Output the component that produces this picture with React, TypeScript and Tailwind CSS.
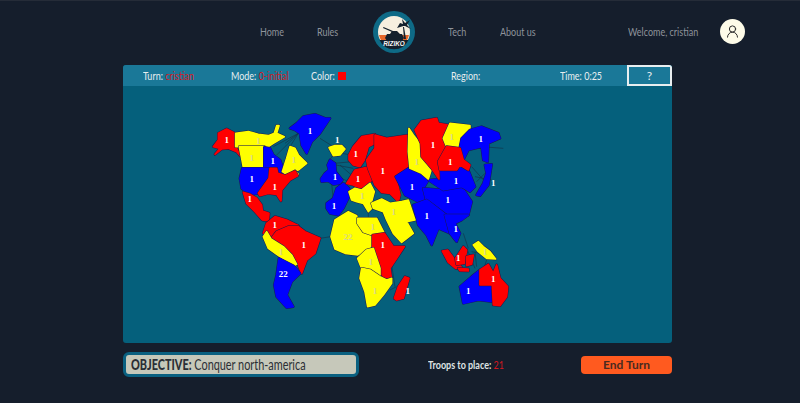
import type { ReactNode } from 'react'
import { UserRound } from 'lucide-react'

const RED = '#ff0000'
const BLUE = '#0000ff'
const YELLOW = '#ffff00'
const PALE = '#d8d88a'

// traced at 3x, the group below scales it back to the page
const zones: [string, string][] = [
  [RED, '25,125 40,105 40,85 65,72 90,85 92,125 108,155 95,140 70,130 50,132 30,148 45,130'],
  [YELLOW, '92,85 130,80 160,88 190,92 208,85 215,62 222,62 215,85 238,95 205,115 190,125 105,125 92,125'],
  [YELLOW, '103,125 178,125 178,187 115,187 110,160'],
  [BLUE, '178,127 195,130 205,150 225,165 232,185 235,207 215,205 200,190 178,190'],
  [YELLOW, '255,125 270,130 280,150 305,175 280,195 270,198 268,205 240,205 232,200 245,160'],
  [YELLOW, '270,198 280,208 275,212'],
  [BLUE, '112,190 192,190 192,215 160,265 135,268 110,250 105,220'],
  [RED, '195,190 215,190 218,205 240,212 270,198 278,212 255,225 230,255 228,288 215,268 190,265 165,272 160,265 192,220'],
  [RED, '115,262 135,268 155,280 170,300 172,318 192,325 190,348 172,345 150,320 125,295'],
  [BLUE, '255,70 275,55 295,35 330,28 360,40 375,40 355,70 345,85 320,110 305,145 290,120 285,85 270,75'],
  [YELLOW, '372,128 390,122 410,122 420,132 405,150 385,152'],
  [BLUE, '348,222 360,205 372,195 368,180 375,165 390,175 392,200 412,225 405,235 385,238 370,228 350,230'],
  [BLUE, '365,295 385,280 395,250 415,235 432,250 432,275 415,310 400,330 375,325 365,310'],
  [RED, '432,150 445,125 470,95 510,88 510,115 490,125 478,165 465,185 445,180 432,165'],
  [RED, '425,235 450,195 495,185 505,215 490,240 465,250 445,240'],
  [YELLOW, '432,260 450,250 470,255 495,235 508,260 500,290 505,305 490,320 475,295 455,290 440,285'],
  [RED, '510,90 545,100 612,90 612,190 572,215 585,270 580,290 555,265 530,262 510,240 490,190 485,165 510,130'],
  [BLUE, '572,215 610,190 650,205 670,225 655,250 665,290 640,290 600,270 585,240'],
  [BLUE, '655,250 715,255 770,245 800,290 790,330 755,345 690,320 665,290'],
  [BLUE, '625,300 665,285 730,335 735,385 700,370 680,420 665,390 640,360'],
  [BLUE, '720,330 790,330 770,345 750,355 765,385 755,410 735,385'],
  [BLUE, '705,195 755,195 765,180 790,195 810,245 795,260 770,245 715,255 670,225 702,222'],
  [YELLOW, '612,70 625,90 645,115 650,155 680,190 670,222 650,205 615,190 610,140'],
  [RED, '630,75 650,48 695,40 700,55 730,60 715,105 725,125 700,170 702,222 680,190 650,155 648,115'],
  [YELLOW, '735,55 795,62 795,75 765,105 760,125 725,125 715,100'],
  [BLUE, '795,75 830,65 880,85 885,100 850,115 848,170 835,165 830,125 790,135 775,165 765,125 770,100'],
  [RED, '725,125 765,130 775,165 795,180 790,195 765,180 755,195 705,195 700,170'],
  [BLUE, '840,180 860,178 855,210 850,240 825,272 815,270 835,235 845,205'],
  [YELLOW, '500,295 530,282 555,295 590,290 610,285 630,345 605,350 625,385 590,412 565,385 545,345 535,320 505,310'],
  [YELLOW, '378,395 390,345 430,320 455,332 458,350 475,380 500,385 503,420 485,435 458,450 420,445 390,432'],
  [YELLOW, '458,340 490,340 515,340 538,385 503,390 475,380 458,355'],
  [RED, '503,390 538,385 565,425 598,425 575,460 555,490 560,525 540,530 525,495 510,440 503,425'],
  [YELLOW, '458,460 485,435 505,430 525,490 525,515 495,495 470,490'],
  [YELLOW, '470,490 495,495 525,515 545,525 560,520 560,535 535,570 510,600 488,605 480,560 465,520'],
  [RED, '568,580 580,545 600,515 612,520 595,580 575,585'],
  [RED, '175,385 185,355 210,335 245,345 280,362 245,365 215,380 200,400 190,385'],
  [RED, '198,402 215,380 250,365 280,365 300,380 345,400 330,445 305,465 290,505 280,480 260,450 235,425'],
  [YELLOW, '175,395 185,380 198,402 235,425 260,450 275,478 265,482 225,455 190,430'],
  [BLUE, '222,460 265,482 285,505 260,530 245,570 265,605 245,608 215,575 208,540 215,510'],
  [RED, '712,438 728,435 750,465 770,488 752,490 730,472'],
  [RED, '752,460 775,425 785,435 778,475 755,478'],
  [RED, '785,455 805,450 800,478 785,482'],
  [RED, '760,490 790,492 790,498 765,497'],
  [YELLOW, '805,420 820,410 835,425 855,440 872,462 845,460 820,440'],
  [BLUE, '765,545 800,515 825,495 825,540 862,540 862,590 820,585 775,595'],
  [RED, '825,495 850,478 865,505 875,480 885,520 908,545 905,575 885,602 865,600 862,540 825,540'],
]

const links = [
  [280, 85, 205, 125], [280, 85, 215, 150], [280, 85, 240, 115], [280, 85, 255, 125], [345, 100, 385, 125],
  [385, 150, 370, 170], [410, 145, 440, 150], [390, 175, 440, 170], [392, 180, 445, 190], [380, 235, 385, 285],
  [400, 215, 430, 230], [405, 180, 445, 215], [490, 320, 490, 340], [378, 395, 345, 400], [560, 480, 570, 545],
  [575, 545, 555, 555], [830, 125, 895, 130], [800, 185, 840, 230], [810, 215, 860, 225], [775, 385, 790, 430],
  [785, 430, 810, 490], [810, 440, 815, 485], [845, 465, 835, 495], [800, 440, 850, 450], [815, 230, 840, 205],
]

const labels: [number, number, string, string?][] = [
  [65, 106, '1'], [160, 108, '1', PALE], [140, 160, '1', PALE], [203, 168, '1'], [266, 165, '1', PALE], [140, 221, '1'],
  [209, 246, '1'], [134, 281, '1'], [315, 78, '1'], [397, 106, '1'], [390, 216, '1'], [387, 302, '1'], [452, 147, '1'],
  [459, 222, '1'], [472, 272, '1', PALE], [533, 197, '1'], [635, 172, '1', PALE], [684, 121, '1'], [740, 97, '1', PALE],
  [827, 103, '1'], [736, 171, '1'], [753, 228, '1'], [865, 233, '1'], [621, 246, '1'], [728, 284, '1'],
  [566, 322, '1', PALE], [665, 334, '1'], [752, 372, '1'], [760, 458, '1'], [840, 441, '1', PALE], [790, 558, '1'],
  [865, 522, '1'], [608, 558, '1'], [510, 558, '1', PALE], [497, 472, '1', PALE], [533, 421, '1'], [503, 366, '1', PALE],
  [429, 396, '22', PALE], [209, 359, '1'], [296, 421, '1'], [228, 440, '1', PALE], [235, 508, '22'],
]

function WorldMap() {
  return (
    <svg viewBox="123 86 549 257" className="block h-full w-full">
      <g transform="translate(205 105) scale(0.3333)">
        {links.map(([x1, y1, x2, y2]) => (
          <line key={`${x1}-${y1}-${x2}-${y2}`} x1={x1} y1={y1} x2={x2} y2={y2} stroke="#123348" strokeWidth="2" />
        ))}
        {/* fat round strokes take the corners off the traced outlines */}
        {zones.map(([fill, points]) => (
          <g key={points} strokeLinejoin="round">
            <polygon points={points} fill={fill} stroke="#1a1a50" strokeWidth="8" />
            <polygon points={points} fill={fill} stroke={fill} strokeWidth="5" />
          </g>
        ))}
        {labels.map(([x, y, text, fill], i) => (
          <text
            key={i}
            x={x}
            y={y + 9}
            textAnchor="middle"
            fontSize="27"
            fontWeight="700"
            fontFamily="Liberation Serif, serif"
            fill={fill ?? '#ffffff'}
          >
            {text}
          </text>
        ))}
      </g>
    </svg>
  )
}

function Logo() {
  return (
    <svg viewBox="0 0 42 42" className="h-[42px] w-[42px]">
      <circle cx="21" cy="21" r="21" fill="#0e6a86" />
      <circle cx="21" cy="21" r="16" fill="#f7efdf" />
      <path d="M6 24 H36 A15 15 0 0 1 34 29 H8 A15 15 0 0 1 6 24Z" fill="#e8682a" />
      <path d="M6.5 29 H35.5 A16 16 0 0 1 6.5 29Z" fill="#14202c" />
      <path d="M12 27 L14 23 H17 L19 20 H24 L27 23 H29 L31 27 L29 30 H14Z" fill="#14202c" />
      <path d="M19 21 L10 17 L10.5 16 L20 20Z" fill="#14202c" />
      <path d="M31 28 L30 16 L31 16 L33 28Z" fill="#14202c" />
      <path d="M30.5 15 L24 17 L27 12 L30 13 L29 8 L32 12 L37 9 L34 14 L38 18 L32 15Z" fill="#14202c" />
      <text x="21" y="35" textAnchor="middle" fontSize="6.4" fontWeight="700" fontStyle="italic" fontFamily="Liberation Sans, sans-serif" fill="#f5f5f5">
        RIZIKO
      </text>
    </svg>
  )
}

// the page's font is much narrower than anything installed
function Narrow({ children }: { children: ReactNode }) {
  return <span className="inline-block origin-left scale-x-75 whitespace-nowrap">{children}</span>
}

export default function App() {
  return (
    <div className="h-[403px] w-[800px] overflow-hidden border-t border-[#252c38] bg-[#151e2c] font-['Lato',sans-serif]">
      <nav className="flex h-[61px] items-center text-[12px] text-[#8e939b]">
        <span className="ml-[260px] w-[57px]"><Narrow>Home</Narrow></span>
        <span className="w-[56px]"><Narrow>Rules</Narrow></span>
        <span className="w-[75px]"><Logo /></span>
        <span className="w-[52px]"><Narrow>Tech</Narrow></span>
        <span className="w-[128px]"><Narrow>About us</Narrow></span>
        <span className="w-[92px]"><Narrow>Welcome, cristian</Narrow></span>
        <span className="flex h-[25px] w-[25px] items-center justify-center rounded-full bg-[#fdfbe8] text-[#2b2b2b]">
          <UserRound size={15} strokeWidth={1.6} />
        </span>
      </nav>

      <main className="ml-[123px] mt-[3px] w-[549px]">
        <div className="h-[278px] overflow-hidden rounded-[3px] bg-[#05607c]">
          <div className="flex h-[21px] items-center bg-[#1a7898] text-[12px] text-[#e8eef0]">
            <span className="ml-[20px] w-[88px]">
              <Narrow>Turn: <span className="text-[#d4181f]">cristian</span></Narrow>
            </span>
            <span className="w-[80px]">
              <Narrow>Mode: <span className="text-[#d4181f]">0-initial</span></Narrow>
            </span>
            <span className="flex w-[140px] items-center">
              <span className="w-[27px]"><Narrow>Color:</Narrow></span>
              <span className="h-[8px] w-[8px] bg-[#ff0000]" />
            </span>
            <span className="w-[109px]"><Narrow>Region:</Narrow></span>
            <span className="w-[67px]"><Narrow>Time: 0:25</Narrow></span>
            <span className="flex h-full w-[45px] items-center justify-center border-2 border-[#e8eef0]">?</span>
          </div>
          <div className="h-[257px]">
            <WorldMap />
          </div>
        </div>

        <div className="mt-[9px] flex items-center">
          <div className="flex h-[25px] w-[236px] items-center overflow-hidden rounded-[6px] border-[3px] border-[#0a6080] bg-[#c6c8ba] pl-[5px] text-[14.5px] text-[#2b2f35]">
            <Narrow><b className="font-black">OBJECTIVE:</b> Conquer north-america</Narrow>
          </div>
          <span className="ml-[69px] w-[153px] text-[12px] font-bold text-[#dfe3e4]">
            <Narrow>Troops to place: <span className="font-normal text-[#d4181f]">21</span></Narrow>
          </span>
          <button className="h-[18px] w-[91px] rounded-[4px] bg-[#ff5a1f] text-[12px] font-bold text-[#4a2a20]">
            End Turn
          </button>
        </div>
      </main>
    </div>
  )
}
